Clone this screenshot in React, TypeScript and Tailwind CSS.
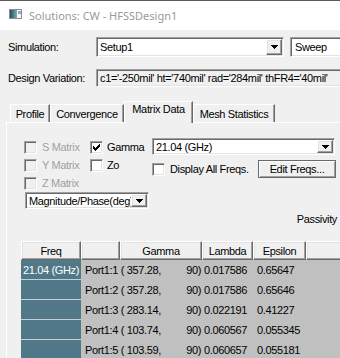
import React from 'react'

const sunken =
  'border border-t-[#a0a0a0] border-l-[#a0a0a0] border-b-white border-r-white shadow-[inset_1px_1px_0_#696969,inset_-1px_-1px_0_#e3e3e3]'
const raised =
  'border border-t-white border-l-white border-b-[#696969] border-r-[#696969] shadow-[inset_-1px_-1px_0_#a0a0a0,inset_1px_1px_0_#e3e3e3]'

interface Row {
  freq: string
  port: string
  mag: string
  lambda: string
  eps: string
}

const rows: Row[] = [
  { freq: '21.04 (GHz)', port: 'Port1:1', mag: '357.28', lambda: '0.017586', eps: '0.65647' },
  { freq: '', port: 'Port1:2', mag: '357.28', lambda: '0.017586', eps: '0.65646' },
  { freq: '', port: 'Port1:3', mag: '283.14', lambda: '0.022191', eps: '0.41227' },
  { freq: '', port: 'Port1:4', mag: '103.74', lambda: '0.060567', eps: '0.055345' },
  { freq: '', port: 'Port1:5', mag: '103.59', lambda: '0.060657', eps: '0.055181' },
]

function AppIcon() {
  return (
    <svg width="13" height="10" viewBox="0 0 13 10" className="shrink-0 mb-[3px]">
      <defs>
        <linearGradient id="ic" x1="0" x2="1" y1="0" y2="0">
          <stop offset="0" stopColor="#2c4878" />
          <stop offset="1" stopColor="#72b89c" />
        </linearGradient>
      </defs>
      <rect x="0.5" y="0.5" width="12" height="9" fill="#f4f6f8" stroke="#8c8c8c" />
      <rect x="1" y="1" width="7" height="8" fill="url(#ic)" />
      <rect x="9" y="2" width="3" height="3" fill="#86acd4" />
    </svg>
  )
}

function DropBtn() {
  return (
    <div className={`w-[16px] shrink-0 bg-[#f0f0f0] ${raised} flex items-center justify-center`}>
      <svg width="7" height="4" viewBox="0 0 7 4" shapeRendering="crispEdges">
        <rect x="0" y="0" width="7" height="1" fill="#000" />
        <rect x="1" y="1" width="5" height="1" fill="#000" />
        <rect x="2" y="2" width="3" height="1" fill="#000" />
        <rect x="3" y="3" width="1" height="1" fill="#000" />
      </svg>
    </div>
  )
}

function Combo({ text, className }: { text: string; className: string }) {
  return (
    <div className={`${sunken} bg-white flex items-stretch p-[1px] shrink-0 ${className}`}>
      <span className="flex-1 pl-[2px] flex items-center overflow-hidden whitespace-nowrap">{text}</span>
      <DropBtn />
    </div>
  )
}

function Check({ checked, disabled }: { checked?: boolean; disabled?: boolean }) {
  const ys = [2, 3, 4, 3, 2, 1, 0]
  return (
    <div
      className={`w-[13px] h-[13px] shrink-0 ${sunken} ${disabled ? 'bg-[#f0f0f0]' : 'bg-white'} flex items-center justify-center`}
    >
      {checked && (
        <svg width="7" height="7" viewBox="0 0 7 7" shapeRendering="crispEdges">
          {ys.map((y, i) => (
            <rect key={i} x={i} y={y} width="1" height="3" fill="#000" />
          ))}
        </svg>
      )}
    </div>
  )
}

function Tab({ label, w, active }: { label: string; w: string; active?: boolean }) {
  if (active) {
    return (
      <div
        className={`${w} h-[22px] -mb-[1px] relative z-10 bg-[#f0f0f0] border-t border-l border-white border-r border-r-[#696969] shadow-[inset_-1px_0_0_#a0a0a0] flex justify-center`}
      >
        {label}
      </div>
    )
  }
  return (
    <div
      className={`${w} h-[18px] border-t border-l border-white border-r border-r-[#696969] shadow-[inset_-1px_0_0_#a0a0a0] flex items-center justify-center`}
    >
      {label}
    </div>
  )
}

function HeadCell({ label, w }: { label: string; w: string }) {
  return (
    <div className={`${w} h-full shrink-0 bg-[#f0f0f0] ${raised} flex items-center justify-center`}>
      {label}
    </div>
  )
}

export default function App() {
  return (
    <div className="w-[340px] h-[358px] overflow-hidden bg-[#f0f0f0] font-['Liberation_Sans',Arial,sans-serif] text-[11px] leading-[14px] tracking-[-0.35px] text-black">
      {/* title bar */}
      <div className="h-[30px] bg-white border-t border-[#5c5c5c] flex items-center pl-[9px]">
        <AppIcon />
        <span className="ml-[7px] font-['Noto_Sans',sans-serif] text-[11px] tracking-normal text-[#9a9a9a]">
          Solutions: CW - HFSSDesign1
        </span>
      </div>

      <div className="flex items-center h-[20px] mt-[7px]">
        <span className="w-[96px] shrink-0 pl-[8px]">Simulation:</span>
        <Combo text="Setup1" className="w-[188px] h-[20px]" />
        <div className={`ml-[6px] w-[60px] h-[20px] shrink-0 bg-white ${sunken} pl-[4px] flex items-center`}>
          Sweep
        </div>
      </div>

      <div className="flex items-center h-[18px] mt-[12px]">
        <span className="w-[96px] shrink-0 pl-[8px]">Design Variation:</span>
        <div className={`w-[260px] h-[18px] shrink-0 ${sunken} pl-[3px] flex items-center whitespace-nowrap`}>
          c1='-250mil' ht='740mil' rad='284mil' thFR4='40mil'
        </div>
      </div>

      {/* tabs */}
      <div className="flex items-end h-[21px] mt-[14px] pl-[10px]">
        <Tab label="Profile" w="w-[40px]" />
        <Tab label="Convergence" w="w-[74px]" />
        <Tab label="Matrix Data" w="w-[69px]" active />
        <Tab label="Mesh Statistics" w="w-[82px]" />
      </div>

      <div className="ml-[6px] w-[334px] h-[240px] border-t border-l border-white pt-[15px]">
        <div className="flex pl-[17px]">
          <div className="w-[128px] shrink-0 flex flex-col">
            <div className="flex items-center h-[18px]">
              <div className="w-[66px] flex items-center gap-[5px]">
                <Check disabled />
                <span className="text-[#a0a0a0]">S Matrix</span>
              </div>
              <div className="flex items-center gap-[4px]">
                <Check checked />
                <span>Gamma</span>
              </div>
            </div>
            <div className="flex items-center h-[18px]">
              <div className="w-[66px] flex items-center gap-[5px]">
                <Check disabled />
                <span className="text-[#a0a0a0]">Y Matrix</span>
              </div>
              <div className="flex items-center gap-[4px]">
                <Check />
                <span>Zo</span>
              </div>
            </div>
            <div className="flex items-center h-[18px]">
              <div className="flex items-center gap-[5px]">
                <Check disabled />
                <span className="text-[#a0a0a0]">Z Matrix</span>
              </div>
            </div>
            <Combo text="Magnitude/Phase(deg)" className="w-[124px] h-[17px] ml-[1px]" />
          </div>

          <div className="w-[184px] shrink-0 flex flex-col">
            <Combo text="21.04 (GHz)" className="w-[183px] h-[17px]" />
            <div className="flex items-center mt-[5px] h-[18px]">
              <Check />
              <span className="ml-[5px]">Display All Freqs.</span>
              <div
                className="ml-auto w-[78px] h-[18px] bg-[#f0f0f0] border border-[#696969] shadow-[inset_1px_1px_0_#fff,inset_-1px_-1px_0_#a0a0a0] flex items-center justify-center"
              >
                Edit Freqs...
              </div>
            </div>
          </div>
        </div>

        <div className="h-[14px] mt-[3px] pr-[3px] text-right">Passivity</div>

        {/* grid */}
        <div className="ml-[14px] mt-[15px]">
          <div className="flex h-[19px]">
            <HeadCell label="Freq" w="w-[60px]" />
            <HeadCell label="" w="w-[39px]" />
            <HeadCell label="Gamma" w="w-[82px]" />
            <HeadCell label="Lambda" w="w-[51px]" />
            <HeadCell label="Epsilon" w="w-[53px]" />
            <HeadCell label="" w="w-[40px]" />
          </div>
          {rows.map((r) => (
            <div key={r.port} className="flex h-[20px]">
              <div className="w-[60px] shrink-0 bg-[#517889] text-white border-b border-[#c8cfd2] pl-[2px] flex items-center whitespace-nowrap">
                {r.freq}
              </div>
              <div className="flex-1 bg-[#c0c0c0] flex items-center whitespace-pre">
                <span className="w-[121px] shrink-0 pl-[4px] pr-[1px] flex justify-between">
                  <span>{r.port + ' ( ' + r.mag + ','}</span>
                  <span>90)</span>
                </span>
                <span className="w-[51px] shrink-0 pl-[2px]">{r.lambda}</span>
                <span className="pl-[4px]">{r.eps}</span>
              </div>
            </div>
          ))}
        </div>
      </div>
    </div>
  )
}
